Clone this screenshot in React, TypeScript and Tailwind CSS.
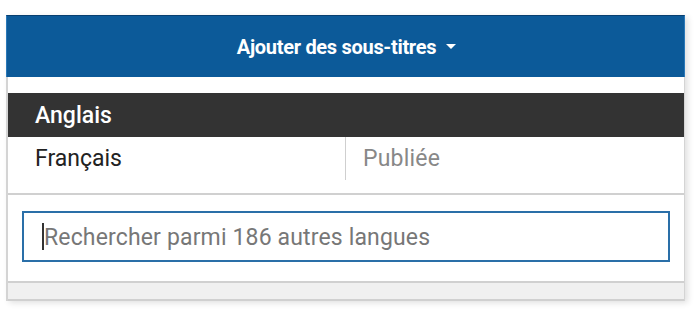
import React from "react";

export default function App() {
  const font = { fontFamily: "Roboto, 'Liberation Sans', sans-serif" };
  return (
    <div className="w-[697px] h-[315px] bg-white pt-[15px] pl-[6px]" style={font}>
      <div className="w-[679px] shadow-[3px_2px_6px_rgba(0,0,0,0.12)]">
        <div className="h-[62px] bg-[#0c5a99] border-t border-[#083f70] border-x border-x-[#2a78b8] flex items-center justify-center gap-[10px] pl-[2px]">
          <span className="text-white text-[20px] font-bold tracking-[-0.3px]">Ajouter des sous-titres</span>
          <svg width="10" height="6" viewBox="0 0 10 6" className="mt-[1px]">
            <path d="M0 0 L10 0 L5 5 Z" fill="white" />
          </svg>
        </div>
        <div className="bg-white border-l-2 border-r border-[#d4d4d4] pt-[16px]">
          <div className="h-[44px] bg-[#333333] flex items-center pl-[27px] pt-[3px]">
            <span className="text-white text-[23px] font-medium">Anglais</span>
          </div>
          <div className="flex h-[43px]">
            <div className="w-[338px] border-r border-[#cfcfcf] flex items-center pl-[27px] pt-[2px]">
              <span className="text-[#222] text-[23px]">Français</span>
            </div>
            <div className="flex items-center pl-[17px] pt-[2px]">
              <span className="text-[#888] text-[23px] tracking-[0.2px]">Publiée</span>
            </div>
          </div>
          <div className="h-[15px] border-b-2 border-[#d0d0d0]" />
          <div className="pt-[16px] pb-[19px] pl-[14px] pr-[14px] border-b-2 border-[#d0d0d0]">
            <div className="h-[51px] border-2 border-[#2a6fa8] flex items-center pl-[18px]">
              <span className="w-[2px] h-[27px] bg-[#333]" />
              <span className="text-[#777] text-[23px] tracking-[0.15px] pt-[3px]">Rechercher parmi 186 autres langues</span>
            </div>
          </div>
          <div className="h-[18px] bg-[#f0f0f0] border-b-2 border-[#d0d0d0]" />
        </div>
      </div>
    </div>
  );
}
